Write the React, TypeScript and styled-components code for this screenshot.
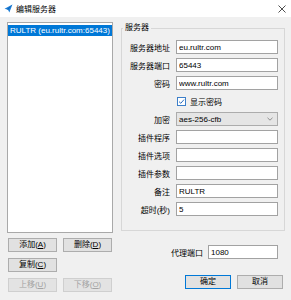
import React from "react";
import styled, { createGlobalStyle } from "styled-components";

const GlobalStyle = createGlobalStyle`
  html, body {
    margin: 0;
    padding: 0;
    background: #f0f0f0;
  }
  body {
    font-family: "Liberation Sans", "Noto Sans CJK SC", sans-serif;
    font-size: 8px;
    color: #000;
  }
`;

const Window = styled.div`
  width: 291px;
  height: 300px;
  background: #f0f0f0;
  display: flex;
  flex-direction: column;
  overflow: hidden;
`;

const TitleBar = styled.div`
  height: 17px;
  flex-shrink: 0;
  background: #fff;
  display: flex;
  align-items: center;
  gap: 3px;
  padding: 0 5px 0 4px;
`;

const Title = styled.span`
  font-size: 8px;
  color: #000;
`;

const CloseBox = styled.span`
  margin-left: auto;
  display: flex;
`;

const Body = styled.div`
  display: flex;
  gap: 8px;
  padding: 5px 6px 0 7px;
`;

const LeftCol = styled.div`
  width: 106px;
  display: flex;
  flex-direction: column;
`;

const ListBox = styled.div`
  height: 211px;
  box-sizing: border-box;
  border: 1px solid #a9a9a9;
  background: #fff;
  padding-top: 2px;
`;

const ListItem = styled.div<{ $selected?: boolean }>`
  height: 11px;
  line-height: 11px;
  padding-left: 2px;
  white-space: nowrap;
  overflow: hidden;
  background: ${(p) => (p.$selected ? "#0078d7" : "transparent")};
  color: ${(p) => (p.$selected ? "#fff" : "#000")};
`;

const ButtonGrid = styled.div`
  display: grid;
  grid-template-columns: 49px 49px;
  grid-auto-rows: 14px;
  column-gap: 6px;
  row-gap: 6px;
  margin-top: 5px;
  padding-left: 1px;
`;

const Button = styled.button<{ $default?: boolean }>`
  height: 14px;
  box-sizing: border-box;
  padding: 0;
  margin: 0;
  font: inherit;
  font-size: 8px;
  line-height: 12px;
  background: #e1e1e1;
  color: #000;
  border: 1px solid ${(p) => (p.$default ? "#0078d7" : "#adadad")};
  &:disabled {
    background: #e3e3e3;
    color: #a3a3a3;
    border-color: #cfcfcf;
  }
`;

const RightCol = styled.div`
  flex: 1;
  display: flex;
  flex-direction: column;
`;

const GroupBox = styled.fieldset`
  margin: 1px 0 0 0;
  padding: 7px 0 14px 0;
  border: 1px solid #d7d7d7;
  min-width: 0;
`;

const Legend = styled.legend`
  padding: 0 2px;
  margin-left: 1px;
  font-size: 8px;
  line-height: 10px;
`;

const FormGrid = styled.div`
  display: grid;
  grid-template-columns: 48px 102px;
  grid-auto-rows: 14px;
  column-gap: 6px;
  row-gap: 4px;
  align-items: center;
`;

const Label = styled.span`
  text-align: right;
  white-space: nowrap;
`;

const TextBox = styled.input<{ $width?: number }>`
  height: 14px;
  width: ${(p) => (p.$width ? `${p.$width}px` : "100%")};
  box-sizing: border-box;
  margin: 0;
  padding: 0 2px;
  border: 1px solid #a2a2a2;
  background: #fff;
  font: inherit;
  font-size: 8px;
  color: #000;
  outline: none;
`;

const Combo = styled.div`
  height: 14px;
  box-sizing: border-box;
  border: 1px solid #acacac;
  background: #e5e5e5;
  display: flex;
  align-items: center;
  justify-content: space-between;
  padding: 0 4px 0 2px;
`;

const CheckRow = styled.label`
  grid-column: 2;
  display: flex;
  align-items: center;
  gap: 4px;
  padding-left: 1px;
`;

const ProxyRow = styled.div`
  display: flex;
  justify-content: flex-end;
  align-items: center;
  gap: 5px;
  margin-top: 14px;
  padding-right: 7px;
`;

const ButtonRow = styled.div`
  display: flex;
  justify-content: flex-end;
  gap: 6px;
  margin-top: 16px;
  padding-right: 2px;
  & > button {
    width: 46px;
  }
`;

const PlaneIcon = () => (
  <svg width="9" height="9" viewBox="0 0 16 16">
    <path d="M1 8.5 L15 1 L9.5 15 L7 10 Z" fill="#1e7fd8" />
    <path d="M7 10 L15 1 L5.5 9.2 Z" fill="#0b5fb0" />
  </svg>
);

const CloseIcon = () => (
  <svg width="8" height="8" viewBox="0 0 8 8">
    <path d="M0.5 0.5 L7.5 7.5 M7.5 0.5 L0.5 7.5" stroke="#222" strokeWidth="0.8" />
  </svg>
);

const CheckIcon = () => (
  <svg width="9" height="9" viewBox="0 0 9 9">
    <rect x="0.5" y="0.5" width="8" height="8" fill="#fff" stroke="#3d7fc9" />
    <path d="M2 4.6 L3.8 6.3 L7 2.6" fill="none" stroke="#2a6fc0" strokeWidth="1" />
  </svg>
);

const Chevron = () => (
  <svg width="6" height="4" viewBox="0 0 6 4">
    <path d="M0.5 0.8 L3 3.2 L5.5 0.8" fill="none" stroke="#777" strokeWidth="0.8" />
  </svg>
);

const fields: [string, string][] = [
  ["服务器地址", "eu.rultr.com"],
  ["服务器端口", "65443"],
  ["密码", "www.rultr.com"],
];

const moreFields: [string, string][] = [
  ["插件程序", ""],
  ["插件选项", ""],
  ["插件参数", ""],
  ["备注", "RULTR"],
  ["超时(秒)", "5"],
];

export default function App() {
  return (
    <>
      <GlobalStyle />
      <Window>
        <TitleBar>
          <PlaneIcon />
          <Title>编辑服务器</Title>
          <CloseBox>
            <CloseIcon />
          </CloseBox>
        </TitleBar>
        <Body>
          <LeftCol>
            <ListBox>
              <ListItem $selected>RULTR (eu.rultr.com:65443)</ListItem>
            </ListBox>
            <ButtonGrid>
              <Button>
                添加(<u>A</u>)
              </Button>
              <Button>
                删除(<u>D</u>)
              </Button>
              <Button>
                复制(<u>C</u>)
              </Button>
              <span />
              <Button disabled>
                上移(<u>U</u>)
              </Button>
              <Button disabled>
                下移(<u>O</u>)
              </Button>
            </ButtonGrid>
          </LeftCol>
          <RightCol>
            <GroupBox>
              <Legend>服务器</Legend>
              <FormGrid>
                {fields.map(([label, value]) => (
                  <React.Fragment key={label}>
                    <Label>{label}</Label>
                    <TextBox defaultValue={value} readOnly />
                  </React.Fragment>
                ))}
                <CheckRow>
                  <CheckIcon />
                  <span>显示密码</span>
                </CheckRow>
                <Label>加密</Label>
                <Combo>
                  <span>aes-256-cfb</span>
                  <Chevron />
                </Combo>
                {moreFields.map(([label, value]) => (
                  <React.Fragment key={label}>
                    <Label>{label}</Label>
                    <TextBox defaultValue={value} readOnly />
                  </React.Fragment>
                ))}
              </FormGrid>
            </GroupBox>
            <ProxyRow>
              <Label>代理端口</Label>
              <TextBox $width={70} defaultValue="1080" readOnly />
            </ProxyRow>
            <ButtonRow>
              <Button $default>确定</Button>
              <Button>取消</Button>
            </ButtonRow>
          </RightCol>
        </Body>
      </Window>
    </>
  );
}
